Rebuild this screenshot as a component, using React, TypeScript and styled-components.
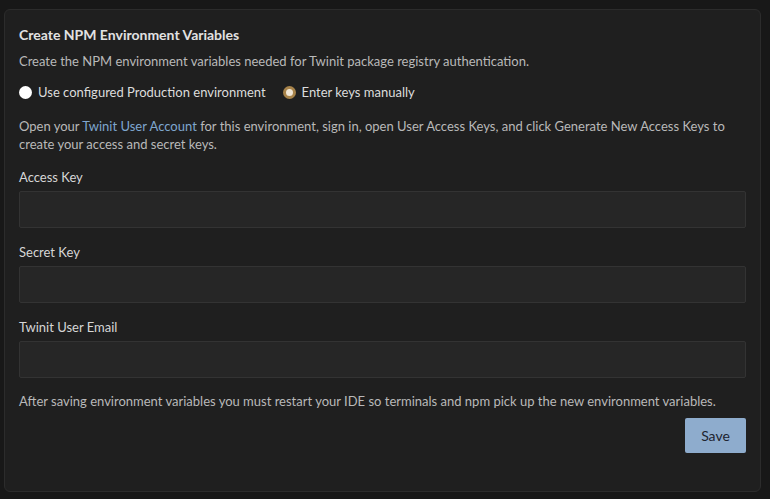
import React from "react";
import styled, { createGlobalStyle } from "styled-components";

const Global = createGlobalStyle`
  html, body { margin: 0; padding: 0; background: #181818; }
  body { font-family: Lato, "Noto Sans", sans-serif; font-size: 13px; }
  * { box-sizing: border-box; }
`;

const Page = styled.div`
  padding: 9px 9px 7px 4px;
  width: 770px;
  height: 499px;
`;

const Card = styled.section`
  background: #1f1f1f;
  border: 1px solid #2c2c2c;
  border-radius: 6px;
  padding: 15px 14px 0 14px;
  height: 483px;
  display: flex;
  flex-direction: column;
`;

const Title = styled.h2`
  margin: 0;
  font-size: 14px;
  font-weight: 700;
  color: #e2e2e2;
  line-height: 20px;
`;

const Text = styled.p<{ $mt?: number }>`
  margin: ${(p) => p.$mt ?? 0}px 0 0 0;
  font-size: 13px;
  line-height: 18px;
  color: #b9b9b9;
`;

const Link = styled.a`
  color: #7ea6cf;
  text-decoration: none;
`;

const RadioRow = styled.div`
  display: flex;
  gap: 17px;
  margin-top: 12px;
  height: 20px;
  align-items: center;
`;

const RadioLabel = styled.label`
  display: flex;
  align-items: center;
  gap: 6px;
  color: #dcdcdc;
  font-size: 13px;
`;

const RadioDot = styled.span<{ $checked?: boolean }>`
  width: 13px;
  height: 13px;
  border-radius: 50%;
  display: inline-block;
  background: ${(p) => (p.$checked ? "#f0e6d6" : "#ffffff")};
  border: ${(p) => (p.$checked ? "3px solid #a7834a" : "none")};
`;

const Field = styled.div`
  display: flex;
  flex-direction: column;
  margin-top: 15px;
`;

const Label = styled.label`
  color: #d6d6d6;
  font-size: 13px;
  line-height: 18px;
  margin-bottom: 5px;
`;

const Input = styled.input`
  height: 37px;
  width: 100%;
  background: #262626;
  border: 1px solid #333333;
  border-radius: 2px;
  color: #ddd;
  outline: none;
  font: inherit;
  padding: 0 8px;
`;

const Actions = styled.div`
  display: flex;
  justify-content: flex-end;
  margin-top: 8px;
`;

const SaveButton = styled.button`
  width: 61px;
  height: 35px;
  background: #8eaccd;
  color: #1d2430;
  border: none;
  border-radius: 2px;
  font-family: inherit;
  font-size: 14px;
`;

export default function App() {
  return (
    <Page>
      <Global />
      <Card>
        <Title>Create NPM Environment Variables</Title>
        <Text $mt={7}>
          Create the NPM environment variables needed for Twinit package registry authentication.
        </Text>
        <RadioRow>
          <RadioLabel>
            <RadioDot />
            Use configured Production environment
          </RadioLabel>
          <RadioLabel>
            <RadioDot $checked />
            Enter keys manually
          </RadioLabel>
        </RadioRow>
        <Text $mt={15}>
          Open your <Link href="#">Twinit User Account</Link> for this environment, sign in, open User
          Access Keys, and click Generate New Access Keys to create your access and secret keys.
        </Text>
        <Field>
          <Label>Access Key</Label>
          <Input />
        </Field>
        <Field>
          <Label>Secret Key</Label>
          <Input />
        </Field>
        <Field>
          <Label>Twinit User Email</Label>
          <Input />
        </Field>
        <Text $mt={14}>
          After saving environment variables you must restart your IDE so terminals and npm pick up the
          new environment variables.
        </Text>
        <Actions>
          <SaveButton>Save</SaveButton>
        </Actions>
      </Card>
    </Page>
  );
}
